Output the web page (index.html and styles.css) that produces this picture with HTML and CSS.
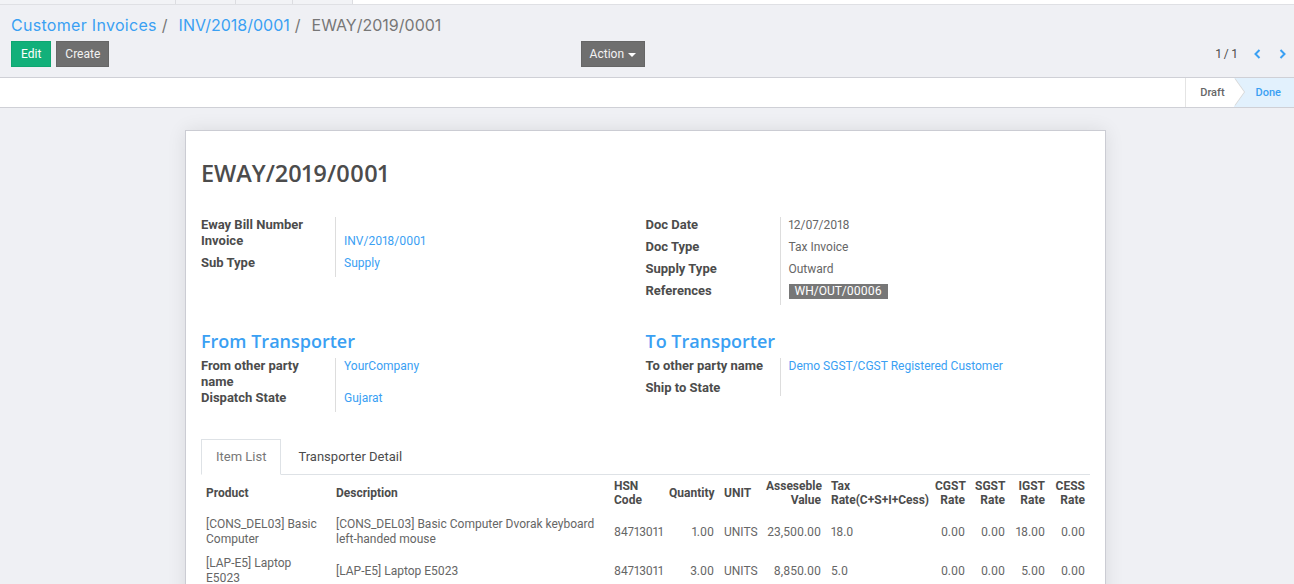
FILE: index.html
```html
<!DOCTYPE html>
<html>
<head>
<meta charset="utf-8">
<link rel="stylesheet" href="styles.css">
</head>
<body>
<div class="topstrip">
  <div class="seg seg1"></div><div class="seg seg2"></div><div class="seg seg3"></div><div class="seg seg4"></div><div class="seg seg-rest"></div>
</div>
<div class="cp">
  <div class="breadcrumb">
    <a href="#" class="crumb-first">Customer Invoices</a><span class="sep">/</span><a href="#">INV/2018/0001</a><span class="sep">/</span><span class="cur">EWAY/2019/0001</span>
  </div>
  <div class="cp-row">
    <div class="cp-left">
      <button class="btn btn-edit">Edit</button>
      <button class="btn btn-gray">Create</button>
      <button class="btn btn-gray btn-action">Action <span class="caret"></span></button>
    </div>
    <div class="pager">
      <span class="pager-val">1 / 1</span>
      <svg class="chev" width="7" height="10" viewBox="0 0 7 10"><polyline points="5.5,1 1.5,5 5.5,9" fill="none" stroke="#3aa0f3" stroke-width="2"/></svg>
      <svg class="chev chev2" width="7" height="10" viewBox="0 0 7 10"><polyline points="1.5,1 5.5,5 1.5,9" fill="none" stroke="#3aa0f3" stroke-width="2"/></svg>
    </div>
  </div>
</div>
<div class="statusbar">
  <div class="st st-draft">Draft</div>
  <div class="st st-done">Done</div>
</div>
<div class="sheet-wrap">
  <div class="sheet">
    <h1 class="title">EWAY/2019/0001</h1>
    <div class="group-row">
      <div class="fgroup">
        <div class="lbl">Eway Bill Number</div><div class="val empty"></div>
        <div class="lbl">Invoice</div><div class="val link">INV/2018/0001</div>
        <div class="lbl">Sub Type</div><div class="val link">Supply</div>
      </div>
      <div class="fgroup">
        <div class="lbl">Doc Date</div><div class="val">12/07/2018</div>
        <div class="lbl">Doc Type</div><div class="val">Tax Invoice</div>
        <div class="lbl">Supply Type</div><div class="val">Outward</div>
        <div class="lbl">References</div><div class="val"><span class="tag">WH/OUT/00006</span></div>
      </div>
    </div>
    <div class="group-row group-row2">
      <div class="gcol">
        <h2 class="sec-title">From Transporter</h2>
        <div class="fgroup">
          <div class="lbl">From other party name</div><div class="val link">YourCompany</div>
          <div class="lbl">Dispatch State</div><div class="val link">Gujarat</div>
        </div>
      </div>
      <div class="gcol">
        <h2 class="sec-title">To Transporter</h2>
        <div class="fgroup">
          <div class="lbl">To other party name</div><div class="val link">Demo SGST/CGST Registered Customer</div>
          <div class="lbl">Ship to State</div><div class="val empty"></div>
        </div>
      </div>
    </div>
    <div class="tabs">
      <div class="tab active">Item List</div>
      <div class="tab">Transporter Detail</div>
    </div>
    <table class="items">
      <colgroup>
        <col style="width:130px"><col style="width:278px"><col style="width:55px"><col style="width:55px"><col style="width:42px"><col style="width:65px"><col style="width:104px"><col style="width:40px"><col style="width:40px"><col style="width:40px"><col style="width:40px">
      </colgroup>
      <thead>
        <tr>
          <th>Product</th>
          <th>Description</th>
          <th>HSN<br>Code</th>
          <th class="r">Quantity</th>
          <th>UNIT</th>
          <th class="r">Asseseble<br>Value</th>
          <th>Tax<br>Rate(C+S+I+Cess)</th>
          <th class="r">CGST<br>Rate</th>
          <th class="r">SGST<br>Rate</th>
          <th class="r">IGST<br>Rate</th>
          <th class="r">CESS<br>Rate</th>
        </tr>
      </thead>
      <tbody>
        <tr>
          <td>[CONS_DEL03] Basic<br>Computer</td>
          <td>[CONS_DEL03] Basic Computer Dvorak keyboard<br>left-handed mouse</td>
          <td>84713011</td>
          <td class="r">1.00</td>
          <td>UNITS</td>
          <td class="r">23,500.00</td>
          <td>18.0</td>
          <td class="r">0.00</td>
          <td class="r">0.00</td>
          <td class="r">18.00</td>
          <td class="r">0.00</td>
        </tr>
        <tr>
          <td>[LAP-E5] Laptop<br>E5023</td>
          <td>[LAP-E5] Laptop E5023</td>
          <td>84713011</td>
          <td class="r">3.00</td>
          <td>UNITS</td>
          <td class="r">8,850.00</td>
          <td>5.0</td>
          <td class="r">0.00</td>
          <td class="r">0.00</td>
          <td class="r">5.00</td>
          <td class="r">0.00</td>
        </tr>
      </tbody>
    </table>
  </div>
</div>
</body>
</html>
```
FILE: styles.css
```css
* { box-sizing: border-box; }
html, body { margin: 0; padding: 0; }
body {
  font-family: Roboto, "Open Sans", sans-serif;
  font-size: 12px;
  font-variant-numeric: proportional-nums;
  color: #4c4c4c;
  background: #eff0f4;
  width: 1294px;
  height: 584px;
  overflow: hidden;
}

/* top strip */
.topstrip { display: flex; height: 5px; border-bottom: 1px solid #dfe0e4; background: #f2f3f6; }
.seg { border-right: 1px solid #dcdde1; }
.seg1 { width: 176px; }
.seg2 { width: 60px; }
.seg3 { width: 57px; }
.seg4 { width: 60px; }
.seg-rest { flex: 1; background: #fff; border-right: 0; }

/* control panel */
.cp { padding: 9px 8px 10px 11px; border-bottom: 1px solid #cfd0d6; }
.breadcrumb { font-family: Inter, Roboto, sans-serif; font-size: 16px; line-height: 22px; color: #777; white-space: nowrap; }
.breadcrumb a { color: #3aa0f3; text-decoration: none; }
.breadcrumb .crumb-first { letter-spacing: 0.3px; }
.breadcrumb .sep { color: #777; padding: 0 11px 0 5px; }
.cp-row { display: flex; align-items: center; margin-top: 5px; height: 26px; }
.cp-left { display: flex; width: 634px; }
.btn {
  height: 26px; padding: 0 8px; font-family: inherit; font-size: 12px; line-height: 24px;
  color: #fff; border: 1px solid transparent; border-radius: 0; margin-right: 5px; cursor: pointer;
}
.btn-edit { background: #12b07a; border-color: #0fa571; padding: 0 9px; }
.btn-gray { background: #6f6f6f; border-color: #666; color: #f2f2f2; }
.btn-action { margin-left: auto; margin-right: 0; padding: 0 8px; }
.caret {
  display: inline-block; width: 0; height: 0; vertical-align: middle; margin-left: 1px;
  border-top: 4px solid #fff; border-left: 4px solid transparent; border-right: 4px solid transparent;
}
.pager { margin-left: auto; display: flex; align-items: center; }
.pager-val { margin-right: 17px; }
.chev2 { margin-left: 18px; }

/* status bar */
.statusbar {
  height: 30px; background: #fff; border-bottom: 1px solid #cfd0d6;
  display: flex; justify-content: flex-end;
}
.st { font-size: 11px; font-weight: 500; line-height: 29px; }
.st-draft { position: relative; background: #fff; color: #666; border-left: 1px solid #e4e4e4; padding: 0 9px 0 14px; }
.st-draft::before, .st-draft::after {
  content: ""; position: absolute; top: 0; left: 100%; width: 0; height: 0;
  border-top: 14.5px solid transparent; border-bottom: 14.5px solid transparent;
}
.st-draft::before { border-left: 10px solid #d8d8d8; margin-left: 1px; }
.st-draft::after { border-left: 10px solid #fff; }
.st-done { background: #e2f1fd; color: #3aa0f3; padding: 0 13px 0 22px; }

/* sheet */
.sheet-wrap { padding: 22px 0 0 185px; }
.sheet {
  width: 921px; min-height: 600px; background: #fff; border: 1px solid #cbccd3;
  box-shadow: 0 0 18px rgba(0, 0, 0, 0.09);
  padding: 28px 15px 0;
}
.title { margin: 0; font-family: "Open Sans", Roboto, sans-serif; font-size: 23.5px; font-weight: 600; line-height: 28px; color: #4c4c4c; }
.group-row { display: grid; grid-template-columns: 1fr 1fr; margin-top: 30px; }
.fgroup { display: grid; grid-template-columns: 135px 1fr; align-content: start; }
.lbl { font-size: 13px; font-weight: 700; line-height: 16px; border-right: 1px solid #ddd; padding-right: 8px; }
.val { line-height: 16px; padding: 0 0 6px 8px; color: #666; }
.val.empty { padding-bottom: 0; }
.val.link { color: #3aa0f3; }
.tag { display: inline-block; background: #777; color: #fff; line-height: 15px; padding: 0 6px; margin-top: 1px; }

.group-row2 { margin-top: 25px; }
.sec-title { margin: 0 0 6px; font-family: "Open Sans", Roboto, sans-serif; font-size: 18px; font-weight: 600; line-height: 22px; color: #3aa0f3; }

/* tabs */
.tabs { display: flex; border-bottom: 1px solid #dee2e6; margin-top: 27px; }
.tab {
  padding: 0 14px; font-size: 13px; line-height: 34px; border: 1px solid transparent; border-bottom: 0;
  margin-bottom: -1px; margin-right: 2px; color: #4c4c4c;
}
.tab.active { border-color: #dee2e6; background: #fff; color: #777; border-bottom: 1px solid #fff; }

/* table */
.items { width: 889px; table-layout: fixed; border-collapse: collapse; }
.items th { font-weight: 700; text-align: left; line-height: 14px; padding: 4px 5px 5px; vertical-align: middle; color: #4c4c4c; }
.items td { line-height: 15px; padding: 5px 5px 4px; vertical-align: middle; color: #666; white-space: nowrap; }
.items .r { text-align: right; }
```
